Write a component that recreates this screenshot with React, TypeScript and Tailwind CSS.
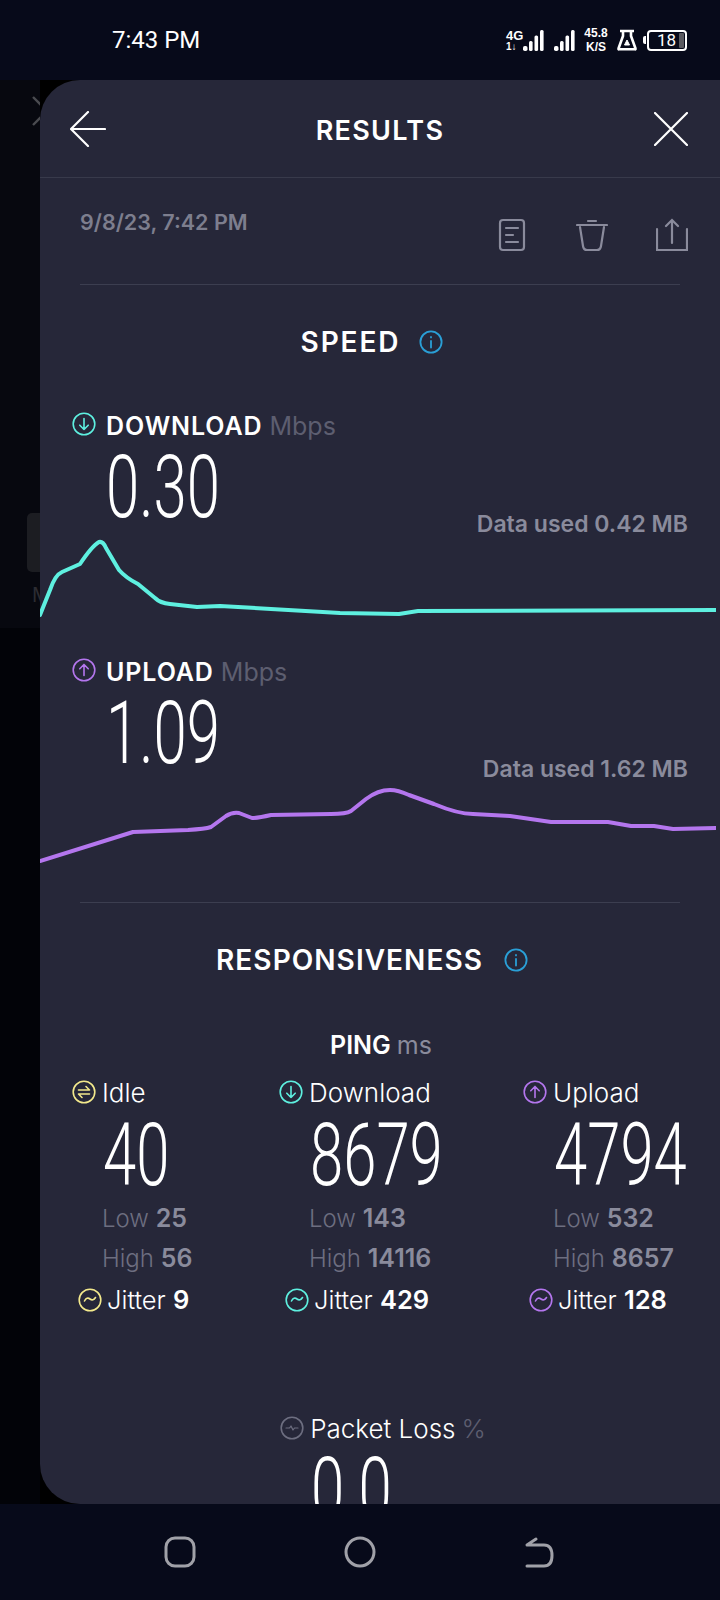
const sans = "font-['Inter',sans-serif]";

const CYAN = "#5ef0e0";
const PURPLE = "#b476ee";
const YELLOW = "#f3e98c";

const downloadLine =
  "M40 615 L50 590 Q55 575 62 572 L80 564 Q92 546 99 542 Q103 541 106 548 L119 570 Q126 578 138 584 L155 598 Q160 603 170 604 L197 607 L220 606 L271 609 L340 613 L399 614 L418 611 L716 610";
const uploadLine =
  "M40 860 L133 831 L188 829 Q205 828 211 826 L226 815 Q232 811 239 812 L252 817 Q258 817 271 814 L331 813 Q346 813 351 810 L366 798 Q378 789 390 789 Q398 789 409 794 L434 803 Q458 813 473 813 L510 815 L551 821 L608 821 L631 825 L654 825 L673 828 L716 827";

const BigNumber = ({ value }: { value: string }) => (
  <div className="h-[62px] w-[172px] shrink-0 origin-top-left scale-x-[0.68] whitespace-nowrap font-['Roboto',sans-serif] text-[88px] leading-[63px] font-light text-white">
    {value}
  </div>
);

const CircleIcon = ({
  color,
  children,
}: {
  color: string;
  children: React.ReactNode;
}) => (
  <svg width="24" height="24" viewBox="0 0 24 24" fill="none" stroke={color} strokeWidth="1.6" strokeLinecap="round" strokeLinejoin="round" className="shrink-0">
    <circle cx="12" cy="12" r="10.8" />
    {children}
  </svg>
);

const DownIcon = () => (
  <CircleIcon color={CYAN}>
    <path d="M12 6.500v11M7.800 13.200l4.200 4.300 4.200-4.300" />
  </CircleIcon>
);
const UpIcon = () => (
  <CircleIcon color={PURPLE}>
    <path d="M12 17.500v-11M7.800 10.800l4.200-4.300 4.200 4.300" />
  </CircleIcon>
);
const IdleIcon = () => (
  <CircleIcon color={YELLOW}>
    <path d="M6.500 10h11l-3.500-3.500M17.500 14h-11l3.500 3.500" />
  </CircleIcon>
);
const JitterIcon = ({ color }: { color: string }) => (
  <CircleIcon color={color}>
    <path d="M6.500 13c1.500-3 3.500-3.500 5.500-2s4 1 5.500-1.500" />
  </CircleIcon>
);
const InfoIcon = () => (
  <svg width="24" height="24" viewBox="0 0 24 24" fill="none" stroke="#2a9fd6" strokeWidth="1.8" strokeLinecap="round">
    <circle cx="12" cy="12" r="10.6" />
    <path d="M12 11v6.500M12 7v.4" />
  </svg>
);

const SpeedBlock = ({
  icon,
  label,
  value,
  used,
  usedPad,
  line,
  color,
  box,
  height,
}: {
  icon: React.ReactNode;
  label: string;
  value: string;
  used: string;
  usedPad: string;
  line: string;
  color: string;
  box: string;
  height: number;
}) => (
  <>
    <div className="flex h-[28px] items-center pl-[32px]">
      {icon}
      <span className="mt-[6px] ml-[10px] text-[25px] font-semibold tracking-[0.9px] text-white">{label}</span>
      <span className="mt-[6px] ml-[7px] text-[25px] font-normal text-[#5d5e70]">Mbps</span>
    </div>
    <div className={`mt-[17px] flex items-start justify-between pr-[32px] pl-[66px] ${usedPad}`}>
      <BigNumber value={value} />
      <span className="self-end text-[23px] leading-[28px] font-semibold text-[#8a8b9c]">{used}</span>
    </div>
    <svg width="676" height={height} viewBox={box} fill="none" className="block">
      <path d={line} stroke={color} strokeWidth="4" strokeLinecap="round" strokeLinejoin="round" />
    </svg>
  </>
);

const pingColumns = [
  { label: "Idle", value: "40", low: "25", high: "56", jitter: "9", width: "w-[207px]", icon: <IdleIcon />, jitterColor: YELLOW },
  { label: "Download", value: "8679", low: "143", high: "14116", jitter: "429", width: "w-[244px]", icon: <DownIcon />, jitterColor: CYAN },
  { label: "Upload", value: "4794", low: "532", high: "8657", jitter: "128", width: "w-[197px]", icon: <UpIcon />, jitterColor: PURPLE },
];

const SignalBars = ({ className }: { className: string }) => (
  <svg width="22" height="24" viewBox="0 0 22 24" fill="#fff" className={className}>
    <rect x="0" y="17" width="4.500" height="5" rx="1.800" />
    <rect x="6" y="12" width="3.600" height="10" rx="1.500" />
    <rect x="11.500" y="6.500" width="3.600" height="15.500" rx="1.500" />
    <rect x="17" y="1" width="3.600" height="21" rx="1.500" />
  </svg>
);

const StatusIcons = () => (
  <div className="flex items-center text-white">
    <div className="-mr-[2px] flex w-[19px] flex-col items-start font-['Liberation_Sans',sans-serif] font-bold">
      <span className="text-[13px] leading-[12px]">4G</span>
      <span className="text-[10px] leading-[9px]">1↓</span>
    </div>
    <SignalBars className="mt-[1px]" />
    <SignalBars className="mt-[1px] ml-[9px]" />
    <div className="ml-[7px] flex w-[26px] flex-col items-center font-['Liberation_Sans',sans-serif] text-[12px] leading-[14px] font-bold">
      <span>45.8</span>
      <span>K/S</span>
    </div>
    <svg width="22" height="22" viewBox="0 0 22 22" fill="none" stroke="#fff" strokeWidth="2.600" strokeLinejoin="round" className="ml-[7px]">
      <path d="M4 2h14M7 2v5L2.500 19.500a.5.5 0 0 0 .5.8h16a.5.5 0 0 0 .5-.8L15 7V2" />
      <path d="M11 11l-2.500 5h5z" fill="#fff" strokeWidth="1" />
    </svg>
    <div className="ml-[5px] h-[8px] w-[3px] rounded-l-[2px] bg-white" />
    <div className="relative ml-[1px] flex h-[21px] w-[40px] items-center rounded-[4px] border-2 border-white pl-[8px] font-['Roboto',sans-serif] text-[17px] leading-none">
      18
      <div className="absolute top-[1px] right-[1px] bottom-[1px] w-[5px] rounded-[1px] bg-[#5a5a60]" />
    </div>
  </div>
);

export default function App() {
  return (
    <div className={`h-[1600px] w-[720px] overflow-hidden bg-[#070a1a] ${sans}`}>
      {/* status bar */}
      <div className="flex h-[80px] items-center justify-between pr-[33px] pl-[112px]">
        <span className="font-['Roboto',sans-serif] text-[24px] leading-none text-white">7:43 PM</span>
        <StatusIcons />
      </div>

      <div className="flex h-[1424px] bg-black">
        {/* previous screen peeking out behind the sheet */}
        <div className="relative w-[40px] shrink-0 overflow-hidden bg-[#020308]">
          <div className="h-[548px] bg-[#07080f]" />
          <svg width="40" height="40" viewBox="0 0 40 40" className="absolute top-[14px] left-0" fill="none" stroke="#4a4b50" strokeWidth="2.400">
            <path d="M33 3l14 14M33 31l14-14" />
          </svg>
          <div className="absolute top-[433px] left-[27px] h-[59px] w-[20px] rounded-[5px] bg-[#1c1d22]" />
          <span className="absolute top-[500px] left-[32px] text-[20px] text-[#2c2c32]">M</span>
        </div>

        <div className="h-[1424px] w-[680px] overflow-hidden rounded-l-[40px] bg-[#262739]">
          {/* header */}
          <div className="flex h-[98px] items-center justify-between border-b border-[#383a4b] pr-[32px] pl-[30px] text-white">
            <svg width="36" height="36" viewBox="0 0 36 36" fill="none" stroke="#fff" strokeWidth="2.200" strokeLinecap="round">
              <path d="M35 18H1M18 1L1 18l17 17" />
            </svg>
            <h1 className="pt-[5px] text-[27px] font-semibold tracking-[1.3px]">RESULTS</h1>
            <svg width="34" height="34" viewBox="0 0 34 34" fill="none" stroke="#fff" strokeWidth="2.200" strokeLinecap="round">
              <path d="M1 1l32 32M33 1L1 33" />
            </svg>
          </div>

          {/* date and actions */}
          <div className="mx-[40px] flex h-[107px] justify-between border-b border-[#3c3e50] pt-[30px]">
            <span className="h-[28px] text-[21.500px] leading-[28px] font-semibold text-[#7d7e8e]">9/8/23, 7:42 PM</span>
            <div className="-mr-[8px] flex items-start pt-[10px]">
              <svg width="28" height="34" viewBox="0 0 28 34" fill="none" stroke="#8a8b9c" strokeWidth="2.200" strokeLinecap="round">
                <rect x="2" y="2" width="24" height="30" rx="3" />
                <path d="M8 10h12M8 17h7M8 24h12" />
              </svg>
              <svg width="32" height="34" viewBox="0 0 32 34" fill="none" stroke="#8a8b9c" strokeWidth="2.200" strokeLinecap="round" strokeLinejoin="round" className="ml-[50px]">
                <path d="M1 7h30M12 3h8" />
                <path d="M4 9l3 19q.5 4 4 4h10q3.500 0 4-4l3-19" />
              </svg>
              <svg width="32" height="34" viewBox="0 0 32 34" fill="none" stroke="#8a8b9c" strokeWidth="2.200" strokeLinecap="round" className="ml-[48px]">
                <path d="M1 11v21h30V11M16 25V2M10 8l6-6 6 6" />
              </svg>
            </div>
          </div>

          {/* speed */}
          <div className="mt-[43px] flex h-[28px] items-center justify-center gap-[19px] pr-[16px] text-white">
            <h2 className="text-[28px] font-semibold tracking-[1.900px]">SPEED</h2>
            <InfoIcon />
          </div>

          <div className="mt-[54px]">
            <SpeedBlock
              icon={<DownIcon />}
              label="DOWNLOAD"
              value="0.30"
              used="Data used 0.42 MB"
              usedPad="h-[83px]"
              line={downloadLine}
              color={CYAN}
              box="40 538 676 82"
              height={82}
            />
          </div>
          <div className="mt-[36px]">
            <SpeedBlock
              icon={<UpIcon />}
              label="UPLOAD"
              value="1.09"
              used="Data used 1.62 MB"
              usedPad="h-[82px]"
              line={uploadLine}
              color={PURPLE}
              box="40 782 676 88"
              height={88}
            />
          </div>

          <div className="mx-[40px] mt-[31px] h-px bg-[#3c3e50]" />

          {/* responsiveness */}
          <div className="mt-[43px] flex h-[28px] items-center justify-center gap-[21px] pr-[16px] text-white">
            <h2 className="text-[28px] font-semibold tracking-[1.050px]">RESPONSIVENESS</h2>
            <InfoIcon />
          </div>

          <div className="mt-[58px] flex h-[28px] items-center justify-center gap-[6px] pl-[2px] text-[25px]">
            <span className="font-semibold text-white">PING</span>
            <span className="text-[#8a8b9c]">ms</span>
          </div>

          <div className="mt-[18px] flex pl-[32px]">
            {pingColumns.map((col) => (
              <div key={col.label} className={`${col.width} shrink-0`}>
                <div className="flex h-[28px] items-center gap-[6px] text-[26px] font-light text-white">
                  {col.icon}
                  {col.label}
                </div>
                <div className="mt-[17px] ml-[31px]">
                  <BigNumber value={col.value} />
                </div>
                <div className="mt-[19px] ml-[30px] h-[28px] text-[24px] leading-[28px] font-light text-[#6d6e80]">
                  Low <span className="text-[25px] font-semibold text-[#8a8b9c]">{col.low}</span>
                </div>
                <div className="mt-[12px] ml-[30px] h-[28px] text-[24px] leading-[28px] font-light text-[#6d6e80]">
                  High <span className="text-[25px] font-semibold text-[#8a8b9c]">{col.high}</span>
                </div>
                <div className="mt-[14px] ml-[6px] flex h-[28px] items-center gap-[5px] text-[25.500px] font-light text-white">
                  <JitterIcon color={col.jitterColor} />
                  <span>
                    Jitter <span className="font-semibold">{col.jitter}</span>
                  </span>
                </div>
              </div>
            ))}
          </div>

          {/* packet loss */}
          <div className="mt-[100px] flex h-[28px] items-center justify-center gap-[6px] pl-[6px] text-[26px] font-light text-white">
            <CircleIcon color="#6d6e80">
              <path d="M6 12h3.500l1.500-2 2 4 1.500-2H18" strokeWidth="1.200" />
            </CircleIcon>
            <span>Packet Loss</span>
            <span className="text-[#5d5e70]">%</span>
          </div>
          <div className="mt-[15px] pl-[271px]">
            <BigNumber value="0.0" />
          </div>
        </div>
      </div>

      {/* navigation bar */}
      <div className="flex h-[96px] items-start pt-[32px] pl-[164px]">
        <svg width="32" height="32" viewBox="0 0 32 32" fill="none" stroke="#a0a1a8" strokeWidth="3">
          <rect x="2" y="2" width="28" height="28" rx="9" />
        </svg>
        <svg width="32" height="32" viewBox="0 0 32 32" fill="none" stroke="#a0a1a8" strokeWidth="3" className="ml-[148px]">
          <circle cx="16" cy="16" r="14" />
        </svg>
        <svg width="32" height="32" viewBox="0 0 32 32" fill="none" stroke="#a0a1a8" strokeWidth="3" strokeLinecap="round" strokeLinejoin="round" className="ml-[148px]">
          <path d="M3 9h17q8 0 8 10.500T20 30H3M3 9l9-6" />
        </svg>
      </div>
    </div>
  );
}
